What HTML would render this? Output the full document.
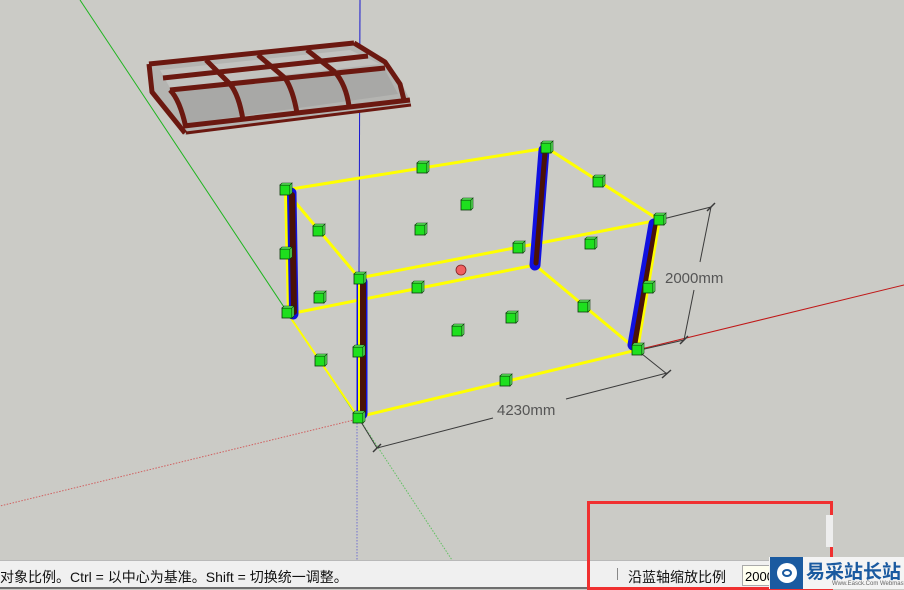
<!DOCTYPE html>
<html><head><meta charset="utf-8">
<style>
html,body{margin:0;padding:0;}
body{width:904px;height:589px;overflow:hidden;position:relative;background:#cbcbc6;font-family:"Liberation Sans","Noto Sans CJK SC",sans-serif;}
#status{position:absolute;left:0;top:560px;width:904px;height:27px;background:#f0f0f0;border-top:1px solid #b9b9b9;}
#bot{position:absolute;left:0;top:587px;width:904px;height:2px;background:#6e6e6e;}
.st{position:absolute;top:567px;font-size:14px;color:#111;white-space:nowrap;}
</style></head><body>
<svg width="904" height="589" style="position:absolute;left:0;top:0">
<defs>
<g id="m"><rect x="-5" y="-5" width="10" height="10" fill="#1ee01e" stroke="#0a3a0a" stroke-width="0.8"/><path d="M-5,-5 L-3,-7 L7,-7 L5,-5Z M5,-5 L7,-7 L7,3 L5,5Z" fill="#5df05d" stroke="#0a3a0a" stroke-width="0.6"/></g>
</defs>
<line x1="80" y1="0" x2="357" y2="417" stroke="#1fb51f" stroke-width="1"/>
<line x1="360" y1="0" x2="359" y2="278" stroke="#1818d0" stroke-width="1"/>
<line x1="358" y1="419" x2="0" y2="506" stroke="#d06060" stroke-width="1" stroke-dasharray="1.5,1.5"/>
<line x1="360" y1="420" x2="452" y2="560" stroke="#60c060" stroke-width="1" stroke-dasharray="1.5,1.5"/>
<line x1="357" y1="420" x2="357" y2="560" stroke="#7070d0" stroke-width="1" stroke-dasharray="1.5,1.5"/>
<line x1="637" y1="350" x2="904" y2="285" stroke="#c01818" stroke-width="1"/>
<!-- canopy -->
<g>
<polygon points="149,64 354,43 385,60 400,80 410,100 411,104 185,135 152,92" fill="#b4b4b1"/>
<polygon points="160,70 350,50 380,64 170,88" fill="#c2c2bf"/>
<polygon points="172,92 385,70 398,94 185,124" fill="#a8a8a6"/>
<g fill="none" stroke="#6b1810" stroke-width="5" stroke-linejoin="round">
<polyline points="149,64 354,43"/>
<polyline points="163,78 368,56"/>
<polyline points="170,90 385,68"/>
<polyline points="184,126 410,100"/>
<polyline points="186,133 411,105" stroke-width="3"/>
<polyline points="149,64 152,92 185,133"/>
<polyline points="354,43 385,62 400,84 404,100"/>
<path d="M170,90 Q180,100 186,128"/>
<path d="M230,84 Q239,95 243,120"/>
<path d="M285,78 Q293,90 297,113"/>
<path d="M335,72 Q346,85 349,106"/>
<line x1="206" y1="60" x2="230" y2="84"/>
<line x1="258" y1="55" x2="285" y2="78"/>
<line x1="307" y1="50" x2="335" y2="72"/>
</g>
</g>
<g stroke="#3a3a3a" stroke-width="1" fill="none">
<line x1="358" y1="417" x2="377" y2="448"/>
<line x1="637" y1="350" x2="667" y2="374"/>
<line x1="377" y1="448" x2="493" y2="418"/>
<line x1="566" y1="399" x2="667" y2="373"/>
<line x1="659" y1="220" x2="711" y2="207"/>
<line x1="640" y1="350" x2="684" y2="340"/>
<line x1="711" y1="207" x2="700" y2="262"/>
<line x1="694" y1="290" x2="684" y2="340"/>
<path d="M373,452 L381,444 M662,378 L671,370 M707,211 L715,203 M680,344 L688,336" stroke-width="1.5"/>
</g>
<text x="497" y="415" font-family="Liberation Sans" font-size="15" fill="#555">4230mm</text>
<text x="665" y="283" font-family="Liberation Sans" font-size="15" fill="#555">2000mm</text>
<g stroke="#ffff00" stroke-width="3" stroke-linecap="round" fill="none">
<polyline points="285,190 547,148 659,220 359,278 285,190"/>
<polyline points="289,314 535,265 637,350 358,417"/>
<line x1="359" y1="278" x2="358" y2="417"/>
<line x1="659" y1="220" x2="637" y2="350"/>
</g>
<line x1="288" y1="314" x2="358" y2="417" stroke="#ffff00" stroke-width="2"/>
<line x1="285" y1="190" x2="288" y2="314" stroke="#ffff00" stroke-width="2"/>
<g stroke-linecap="round">
<line x1="291" y1="193" x2="293" y2="314" stroke="#1010e0" stroke-width="11"/>
<line x1="292" y1="195" x2="294" y2="312" stroke="#4a1208" stroke-width="6"/>
<line x1="544" y1="150" x2="535" y2="265" stroke="#1010e0" stroke-width="11"/>
<line x1="545" y1="152" x2="536" y2="263" stroke="#4a1208" stroke-width="5"/>
<line x1="654" y1="224" x2="633" y2="345" stroke="#1010e0" stroke-width="11"/>
<line x1="656" y1="226" x2="635" y2="344" stroke="#4a1208" stroke-width="6"/>
<line x1="362" y1="282" x2="362" y2="414" stroke="#1010e0" stroke-width="11"/>
<line x1="363" y1="284" x2="363" y2="412" stroke="#4a1208" stroke-width="6"/>
<line x1="359" y1="282" x2="359" y2="414" stroke="#ffff00" stroke-width="2"/>
<line x1="659" y1="224" x2="638" y2="348" stroke="#ffff00" stroke-width="2.5"/>
<line x1="286" y1="193" x2="288" y2="312" stroke="#ffff00" stroke-width="2"/>
</g>
<use href="#m" x="285" y="190"/><use href="#m" x="546" y="148"/><use href="#m" x="659" y="220"/><use href="#m" x="359" y="279"/>
<use href="#m" x="287" y="313"/><use href="#m" x="358" y="418"/><use href="#m" x="637" y="350"/>
<use href="#m" x="422" y="168"/><use href="#m" x="598" y="182"/><use href="#m" x="318" y="231"/><use href="#m" x="518" y="248"/>
<use href="#m" x="417" y="288"/><use href="#m" x="583" y="307"/><use href="#m" x="320" y="361"/><use href="#m" x="505" y="381"/>
<use href="#m" x="285" y="254"/><use href="#m" x="358" y="352"/><use href="#m" x="648" y="288"/>
<use href="#m" x="466" y="205"/><use href="#m" x="420" y="230"/><use href="#m" x="590" y="244"/><use href="#m" x="319" y="298"/>
<use href="#m" x="457" y="331"/><use href="#m" x="511" y="318"/>
<circle cx="461" cy="270" r="5" fill="#f06060" stroke="#802020" stroke-width="0.8"/>
</svg>
<div id="status"></div><div id="bot"></div>
<div class="st" style="left:0">对象比例。Ctrl = 以中心为基准。Shift = 切换统一调整。</div>
<div style="position:absolute;left:617px;top:568px;width:1px;height:12px;background:#888"></div>
<div class="st" style="left:628px">沿蓝轴缩放比例</div>
<div style="position:absolute;left:742px;top:565px;width:40px;height:21px;background:#fffff0;border:1px solid #aaa;font-size:13px;line-height:21px;padding-left:2px;box-sizing:border-box;">2000</div>
<div style="position:absolute;left:587px;top:501px;width:240px;height:83px;border:3px solid #f03030;"></div>
<div style="position:absolute;left:826px;top:515px;width:7px;height:32px;background:#eee;"></div>
<div style="position:absolute;left:769px;top:557px;width:135px;height:32px;background:#f4f4f4;"></div>
<div style="position:absolute;left:770px;top:557px;width:33px;height:32px;background:#1a5aa0;"></div>
<div style="position:absolute;left:777px;top:563px;width:20px;height:20px;border-radius:50%;background:#fff;"></div>
<div style="position:absolute;left:782px;top:569px;width:10px;height:8px;border-radius:50%;border:2px solid #1a5aa0;box-sizing:border-box;"></div>
<div style="position:absolute;left:806px;top:557px;font-size:19px;color:#1a5aa0;font-weight:bold;white-space:nowrap;">易采站长站</div>
<div style="position:absolute;left:832px;top:581px;font-size:6px;color:#666;white-space:nowrap;">Www.Easck.Com Webmaster</div>
</body></html>
